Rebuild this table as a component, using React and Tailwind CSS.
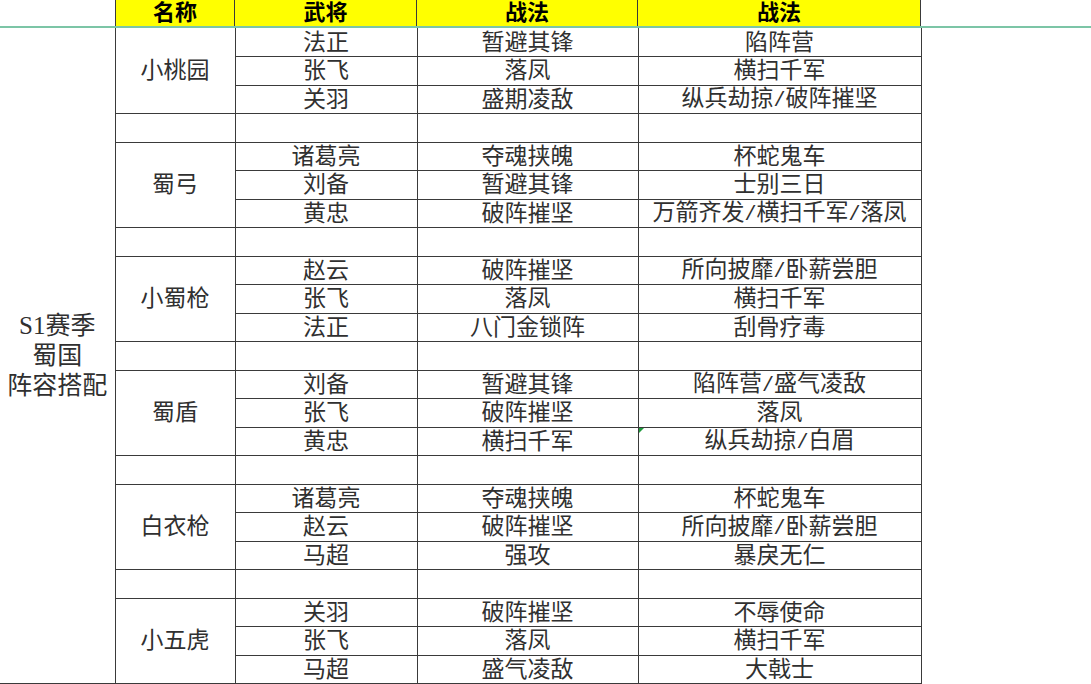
const groups = [
  { name: '小桃园', rows: [['法正', '暂避其锋', '陷阵营'], ['张飞', '落凤', '横扫千军'], ['关羽', '盛期凌敌', '纵兵劫掠/破阵摧坚']] },
  { name: '蜀弓', rows: [['诸葛亮', '夺魂挟魄', '杯蛇鬼车'], ['刘备', '暂避其锋', '士别三日'], ['黄忠', '破阵摧坚', '万箭齐发/横扫千军/落凤']] },
  { name: '小蜀枪', rows: [['赵云', '破阵摧坚', '所向披靡/卧薪尝胆'], ['张飞', '落凤', '横扫千军'], ['法正', '八门金锁阵', '刮骨疗毒']] },
  { name: '蜀盾', rows: [['刘备', '暂避其锋', '陷阵营/盛气凌敌'], ['张飞', '破阵摧坚', '落凤'], ['黄忠', '横扫千军', '纵兵劫掠/白眉', true]] },
  { name: '白衣枪', rows: [['诸葛亮', '夺魂挟魄', '杯蛇鬼车'], ['赵云', '破阵摧坚', '所向披靡/卧薪尝胆'], ['马超', '强攻', '暴戾无仁']] },
  { name: '小五虎', rows: [['关羽', '破阵摧坚', '不辱使命'], ['张飞', '落凤', '横扫千军'], ['马超', '盛气凌敌', '大戟士']] },
]

const cell = 'border-r border-b border-[#3a3a3a] text-center align-middle p-0'

// slashes are half width in the sheet's font
function Skills({ text }) {
  const parts = text.split('/')
  return parts.map((p, i) => (
    <span key={i}>
      {i > 0 && <span className="font-['Liberation_Mono',monospace] text-[20px]">/</span>}
      {p}
    </span>
  ))
}

export default function App() {
  const body = []
  groups.forEach((g, gi) => {
    g.rows.forEach((r, ri) => {
      body.push(
        <tr key={`${gi}-${ri}`} className="h-[28.5px] leading-none">
          {gi === 0 && ri === 0 && (
            <td rowSpan={23} className={`${cell} text-[25px] leading-[30px]`}>
              <div>S1赛季</div>
              <div>蜀国</div>
              <div>阵容搭配</div>
            </td>
          )}
          {ri === 0 && <td rowSpan={3} className={cell}>{g.name}</td>}
          <td className={cell}>{r[0]}</td>
          <td className={cell}>{r[1]}</td>
          <td className={`${cell} relative`}>
            {r[3] && (
              <span className="absolute left-0 top-0 w-0 h-0 border-t-[5px] border-r-[5px] border-t-[#1e9a3c] border-r-transparent" />
            )}
            <Skills text={r[2]} />
          </td>
        </tr>
      )
    })
    if (gi < groups.length - 1) {
      body.push(
        <tr key={`blank-${gi}`} className="h-[28.5px]">
          <td className={cell}></td>
          <td className={cell}></td>
          <td className={cell}></td>
          <td className={cell}></td>
        </tr>
      )
    }
  })

  return (
    <div className="w-[1091px] h-[684px] overflow-hidden bg-white text-[#303030] text-[23px] font-['Liberation_Serif','Noto_Sans_CJK_SC',serif]">
      <div className="flex h-[28px] border-b-2 border-[#7cc5a6] font-bold text-black text-[22px] leading-none">
        <div className="w-[115px] shrink-0" />
        <div className="w-[120px] shrink-0 bg-[#ffff00] border-l border-r border-[#3a3a3a] flex items-center justify-center">名称</div>
        <div className="w-[182px] shrink-0 bg-[#ffff00] border-r border-[#3a3a3a] flex items-center justify-center">武将</div>
        <div className="w-[221px] shrink-0 bg-[#ffff00] border-r border-[#3a3a3a] flex items-center justify-center">战法</div>
        <div className="w-[283px] shrink-0 bg-[#ffff00] border-r border-[#3a3a3a] flex items-center justify-center">战法</div>
      </div>
      <table className="table-fixed border-collapse w-[921px]">
        <colgroup>
          <col className="w-[115px]" />
          <col className="w-[120px]" />
          <col className="w-[182px]" />
          <col className="w-[221px]" />
          <col className="w-[283px]" />
        </colgroup>
        <tbody>{body}</tbody>
      </table>
    </div>
  )
}
